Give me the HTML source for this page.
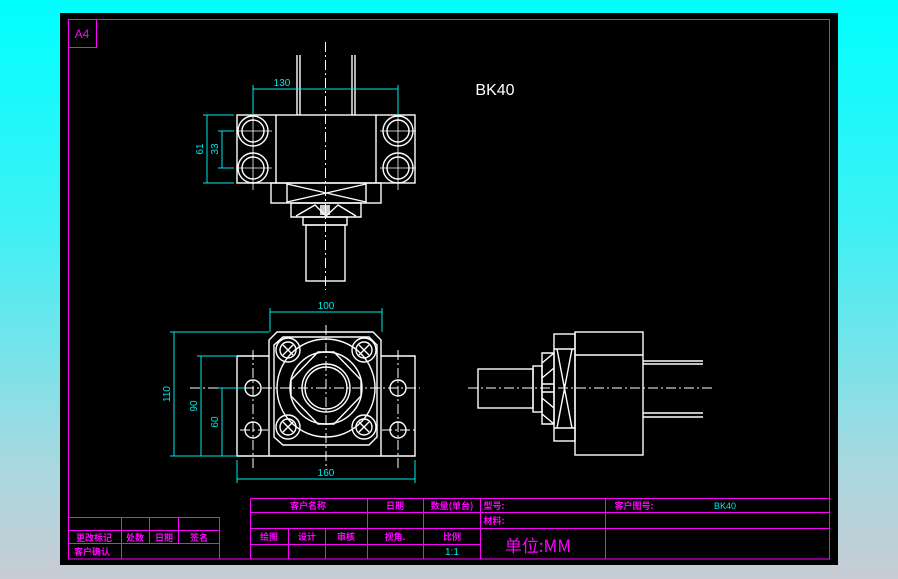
<!DOCTYPE html>
<html><head><meta charset="utf-8"><style>
html,body{margin:0;padding:0;width:898px;height:579px;overflow:hidden}
body{background:linear-gradient(180deg,#00ffff 0%,#40f0f4 40%,#a8d8e0 80%,#c8ccd4 100%)}
svg{position:absolute;left:0;top:0}
.w{stroke:#fff;fill:none;stroke-width:1.4}
.c{stroke:#00e8e8;fill:none;stroke-width:1}
.m{stroke:#ff00ff;fill:none;stroke-width:1}
.cl{stroke:#fff;fill:none;stroke-width:1;stroke-dasharray:10 3 2 3}
.t{font-family:"Liberation Sans","Noto Sans CJK SC",sans-serif;}
.mt{fill:#ff00ff;font-size:9px;font-weight:bold;font-family:"Noto Sans CJK SC","WenQuanYi Zen Hei",sans-serif;text-anchor:middle}
.ct{fill:#00e8e8;font-size:10px;font-family:"Liberation Sans",sans-serif;text-anchor:middle}
</style></head><body>
<svg width="898" height="579" viewBox="0 0 898 579">
<rect x="60" y="13" width="778" height="552" fill="#000"/>
<rect x="68.5" y="19.5" width="761" height="539.5" class="m"/>
<rect x="68.5" y="19.5" width="28" height="28" class="m"/>
<text x="82" y="38" fill="#ff00ff" font-size="12" font-family="Liberation Sans,sans-serif" text-anchor="middle">A4</text>

<!-- title block left -->
<path class="m" d="M68,517.5H219.5V559M68,530.5H219.5M68,543.5H219.5M121.5,517.5V559M149.5,517.5V543.5M178.5,517.5V543.5"/>
<text class="mt" x="94" y="541">更改标记</text><text class="mt" x="135" y="541">处数</text><text class="mt" x="164" y="541">日期</text><text class="mt" x="199" y="541">签名</text>
<text class="mt" x="92" y="555">客户确认</text>
<!-- title block right -->
<path class="m" d="M250.5,498.5H829M250.5,512.5H829M250.5,528.5H829M250.5,544.5H480.5M250.5,498.5V559M288.5,528.5V559M325.5,528.5V559M367.5,498.5V559M423.5,498.5V559M480.5,498.5V559M605.5,498.5V559"/>
<text class="mt" x="308" y="509">客户名称</text><text class="mt" x="395" y="509">日期</text><text class="mt" x="452" y="509">数量(单台)</text>
<text class="mt" x="494" y="509">型号:</text><text class="mt" x="634" y="509">客户图号:</text>
<text x="725" y="509" fill="#00e8e8" font-size="9" font-family="Liberation Sans,sans-serif" text-anchor="middle">BK40</text>
<text class="mt" x="494" y="524">材料:</text>
<text class="mt" x="269" y="540">绘图</text><text class="mt" x="307" y="540">设计</text><text class="mt" x="346" y="540">审核</text><text class="mt" x="395" y="540">视角.</text><text class="mt" x="452" y="540">比例</text>
<text class="ct" x="452" y="555" font-size="9">1:1</text>
<text x="538" y="552" fill="#ff00ff" font-size="17" font-family="Noto Sans CJK SC,sans-serif" text-anchor="middle">单位:MM</text>

<text x="495" y="95" fill="#fff" font-size="16" font-family="Liberation Sans,sans-serif" text-anchor="middle" font-weight="300">BK40</text>

<!-- TOP VIEW -->
<path class="cl" d="M325.5,42V290"/>
<path class="w" d="M297,55V115M300,55V115M352,55V115M355,55V115"/>
<rect class="w" x="237" y="115" width="178" height="68"/>
<path class="w" d="M276,115V183M376,115V183"/>
<g class="w"><circle cx="253" cy="131" r="15"/><circle cx="253" cy="131" r="11"/><circle cx="253" cy="168" r="15"/><circle cx="253" cy="168" r="11"/>
<circle cx="398" cy="131" r="15"/><circle cx="398" cy="131" r="11"/><circle cx="398" cy="168" r="15"/><circle cx="398" cy="168" r="11"/></g>
<path stroke="#fff" stroke-width="0.8" d="M253,110V190M398,110V190M236,131H272M236,168H272M380,131H416M380,168H416"/>
<rect class="w" x="271" y="183" width="110" height="20"/>
<path class="w" d="M287,183V203M366,183V203M287,184L366,202M366,184L287,202"/>
<path class="w" d="M291,203H361V217H291Z M296,216L315,205L326,216 M326,216L338,205L356,216"/>
<rect x="320" y="205" width="10" height="10" fill="#fff" opacity="0.8"/>
<rect class="w" x="303" y="217" width="44" height="8"/>
<rect class="w" x="306" y="225" width="39" height="56"/>
<!-- dims top -->
<path class="c" d="M253,89H398M253,85V115M398,85V115M207,115V183M203,115H234M203,183H234M222,131V168M218,131H234M218,168H234"/>
<text class="ct" x="282" y="86">130</text>
<text class="ct" transform="translate(203,149) rotate(-90)">61</text>
<text class="ct" transform="translate(218,149) rotate(-90)">33</text>

<!-- FRONT VIEW -->
<path class="w" d="M237,456V356H269V340L277,332H373L381,340V356H415V456Z M269,356V456M381,356V456"/>
<path class="w" d="M283,337H369L377,345V437L369,445H283L274,437V345Z"/>
<circle class="w" cx="326" cy="388" r="49"/>
<circle class="w" cx="326" cy="388" r="36"/>
<circle class="w" cx="326" cy="388" r="24"/>
<circle class="w" cx="326" cy="388" r="21"/>
<path class="w" d="M318,352H334L361,380V396L334,424H318L291,396V380Z"/>
<g class="w"><circle cx="288" cy="350" r="12"/><circle cx="288" cy="350" r="8"/><circle cx="364" cy="350" r="12"/><circle cx="364" cy="350" r="8"/>
<circle cx="288" cy="427" r="12"/><circle cx="288" cy="427" r="8"/><circle cx="364" cy="427" r="12"/><circle cx="364" cy="427" r="8"/>
<path d="M283,345L293,355M293,345L283,355M359,345L369,355M369,345L359,355M283,422L293,432M293,422L283,432M359,422L369,432M369,422L359,432"/>
<circle cx="253" cy="388" r="8"/><circle cx="253" cy="430" r="8"/><circle cx="398" cy="388" r="8"/><circle cx="398" cy="430" r="8"/></g>
<path class="cl" d="M326,325V470M190,388H420M253,350V470M398,350V470M240,430H270M382,430H415"/>
<path class="c" d="M270,312H382M270,308V332M382,308V332M237,479H415M237,460V483M415,460V483M174,332V456M170,332H269M170,456H237M201,356V456M197,356H237M222,388V456M218,388H245"/>
<text class="ct" x="326" y="309">100</text>
<text class="ct" x="326" y="476">160</text>
<text class="ct" transform="translate(170,394) rotate(-90)">110</text>
<text class="ct" transform="translate(197,406) rotate(-90)">90</text>
<text class="ct" transform="translate(218,422) rotate(-90)">60</text>

<!-- SIDE VIEW -->
<rect class="w" x="478" y="369" width="55" height="39"/>
<rect class="w" x="533" y="366" width="9" height="46"/>
<path class="w" d="M542,353H554V424H542Z M542,363L554,353M542,378L554,368M542,384H554M542,392H554M542,398L554,408M542,414L554,424"/>
<rect class="w" x="554" y="334" width="21" height="107"/>
<path class="w" d="M554,349H575M554,428H575M557,349L572,428M572,349L557,428"/>
<rect class="w" x="575" y="332" width="68" height="123"/>
<path class="w" d="M575,355H643"/>
<path class="w" d="M643,361H703M643,364H703M643,413H703M643,417H703"/>
<path class="cl" d="M468,388H712"/>
</svg>
</body></html>
